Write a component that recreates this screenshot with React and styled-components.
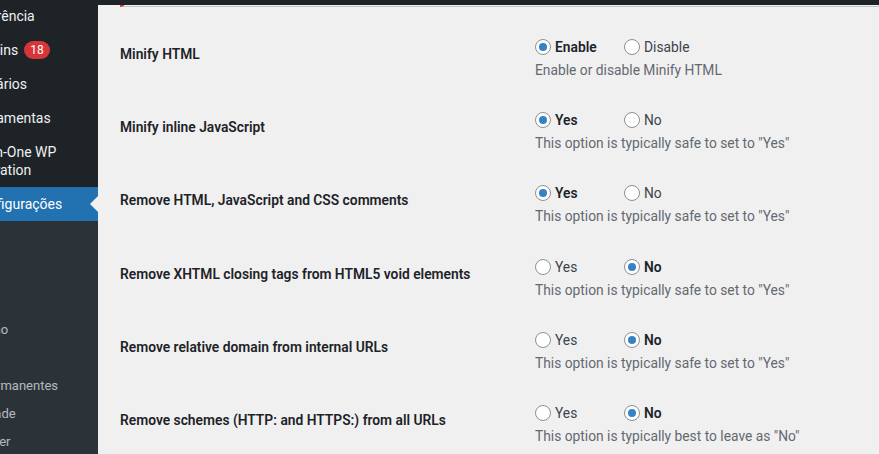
import styled, { createGlobalStyle } from 'styled-components'

const Global = createGlobalStyle`
  html, body { margin: 0; height: 100%; overflow: hidden; }
  body {
    background: #f0f0f1;
    font-family: Roboto, "Noto Sans", sans-serif;
    color: #1d2327;
  }
  #root { height: 100%; }
`

//#region Styled components
const Page = styled.div`
  display: flex;
  height: 100%;
`
const Sidebar = styled.aside`
  width: 98px;
  flex-shrink: 0;
  background: #1d2327;
  overflow: hidden;
`
const Menu = styled.ul`
  list-style: none;
  margin: -1px 0 0 -62px;
  padding: 0;
  width: 160px;
`
const MenuItem = styled.li`
  position: relative;
  padding: 8px 8px 8px 34px;
  font-size: 14px;
  line-height: 18px;
  color: ${({ current }) => (current ? '#fff' : '#f0f0f1')};
  background: ${({ current }) => (current ? '#2271b1' : 'transparent')};
  &::after {
    display: ${({ current }) => (current ? 'block' : 'none')};
    content: '';
    position: absolute;
    right: 0;
    top: 50%;
    margin-top: -8px;
    border: 8px solid transparent;
    border-right-color: #f0f0f1;
  }
`
const Badge = styled.span`
  display: inline-block;
  margin-left: 6px;
  height: 18px;
  min-width: 10px;
  padding: 0 6px;
  border-radius: 9px;
  background: #d63638;
  color: #fff;
  font-size: 12px;
  line-height: 18px;
  vertical-align: top;
`
const Submenu = styled.ul`
  list-style: none;
  margin: 0;
  padding: 11px 0 8px;
  background: #2c3338;
`
const SubItem = styled.li`
  padding: 5px 10px;
  font-size: 13px;
  line-height: 18px;
  color: rgba(240, 246, 252, 0.7);
  white-space: nowrap;
`
const Main = styled.main`
  flex: 1;
  display: flex;
  flex-direction: column;
  min-width: 0;
  & > * { flex-shrink: 0; }
`
const TopBar = styled.div`
  height: 5px;
  background: #1d2327;
`
const NoticeEdge = styled.div`
  height: 1px;
  margin-left: 22px;
  border-left: 4px solid #d63638;
  border-bottom: 1px solid #c3c4c7;
`
const FormTable = styled.div`
  margin-top: 18px;
  padding-left: 22px;
`
const Row = styled.div`
  display: flex;
`
const Th = styled.div`
  width: 415px;
  flex-shrink: 0;
  padding-top: 20px;
  font-size: 13.8px;
  font-weight: 600;
  line-height: 18px;
  color: #1d2327;
`
const Td = styled.div`
  padding: 14px 0 18.2px;
`
const Options = styled.div`
  display: flex;
  height: 16px;
`
const Option = styled.label`
  width: 89px;
  display: flex;
  align-items: center;
  gap: 4px;
  font-size: 13.8px;
  line-height: 16px;
  font-weight: ${({ checked }) => (checked ? 600 : 400)};
  color: ${({ checked }) => (checked ? '#1d2327' : '#3c434a')};
`
const Radio = styled.span`
  box-sizing: border-box;
  width: 16px;
  height: 16px;
  border-radius: 50%;
  border: 1px solid #8c8f94;
  background: #fff;
  display: flex;
  align-items: center;
  justify-content: center;
  &::before {
    content: '';
    display: ${({ checked }) => (checked ? 'block' : 'none')};
    width: 8px;
    height: 8px;
    border-radius: 50%;
    background: #3582c4;
  }
`
const Description = styled.p`
  margin: 5px 0 0;
  font-size: 13.8px;
  line-height: 20px;
  color: #646970;
`
// #endregion

const SAFE_YES = 'This option is typically safe to set to "Yes"'

const settings = [
  { label: 'Minify HTML', options: ['Enable', 'Disable'], value: 0, desc: 'Enable or disable Minify HTML' },
  { label: 'Minify inline JavaScript', options: ['Yes', 'No'], value: 0, desc: SAFE_YES },
  { label: 'Remove HTML, JavaScript and CSS comments', options: ['Yes', 'No'], value: 0, desc: SAFE_YES },
  { label: 'Remove XHTML closing tags from HTML5 void elements', options: ['Yes', 'No'], value: 1, desc: SAFE_YES },
  { label: 'Remove relative domain from internal URLs', options: ['Yes', 'No'], value: 1, desc: SAFE_YES },
  { label: 'Remove schemes (HTTP: and HTTPS:) from all URLs', options: ['Yes', 'No'], value: 1, desc: 'This option is typically best to leave as "No"' }
]

const menu = ['Aparência', 'Plugins', 'Usuários', 'Ferramentas', 'All-in-One WP Migration', 'Configurações']
const submenu = ['Geral', 'Escrita', 'Leitura', 'Discussão', 'Mídia', 'Links permanentes', 'Privacidade', 'Newsletter']

export default function App () {
  return (
    <>
      <Global />
      <Page>
        <Sidebar>
          <Menu>
            {menu.map((name) => (
              <MenuItem key={name} current={name === 'Configurações'}>
                {name}
                {name === 'Plugins' && <Badge>18</Badge>}
              </MenuItem>
            ))}
            <li>
              <Submenu>
                {submenu.map((name) => <SubItem key={name}>{name}</SubItem>)}
              </Submenu>
            </li>
          </Menu>
        </Sidebar>
        <Main>
          <TopBar />
          <NoticeEdge />
          <FormTable>
            {settings.map((s) => (
              <Row key={s.label}>
                <Th>{s.label}</Th>
                <Td>
                  <Options>
                    {s.options.map((opt, i) => (
                      <Option key={opt} checked={i === s.value}>
                        <Radio checked={i === s.value} />
                        {opt}
                      </Option>
                    ))}
                  </Options>
                  <Description>{s.desc}</Description>
                </Td>
              </Row>
            ))}
          </FormTable>
        </Main>
      </Page>
    </>
  )
}
